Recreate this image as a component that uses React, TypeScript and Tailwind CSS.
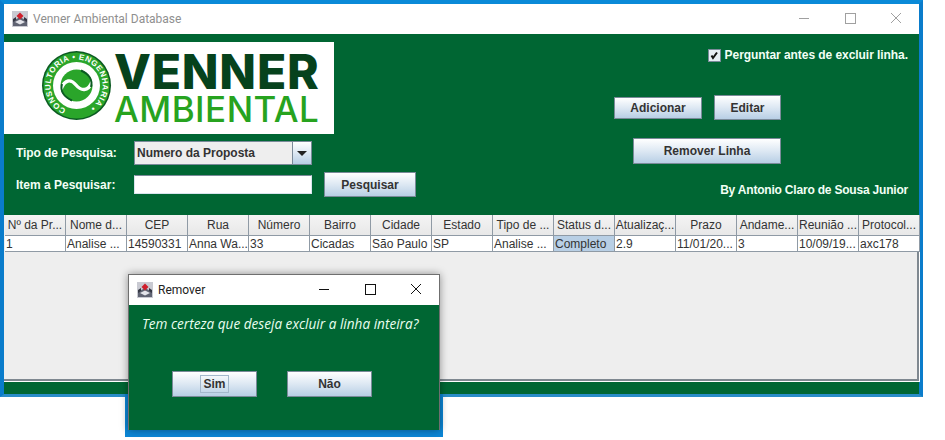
import React from "react";

const columns: [string, string, boolean?][] = [
  ["Nº da Pr...", "1"],
  ["Nome d...", "Analise ..."],
  ["CEP", "14590331"],
  ["Rua", "Anna Wa..."],
  ["Número", "33"],
  ["Bairro", "Cicadas"],
  ["Cidade", "São Paulo"],
  ["Estado", "SP"],
  ["Tipo de ...", "Analise ..."],
  ["Status d...", "Completo", true],
  ["Atualizaç...", "2.9"],
  ["Prazo", "11/01/20..."],
  ["Andame...", "3"],
  ["Reunião ...", "10/09/19..."],
  ["Protocol...", "axc178"],
];

function JavaIcon() {
  return (
    <svg width="16" height="16" viewBox="0 0 16 16" className="shrink-0">
      <rect x="0" y="0" width="16" height="16" fill="#c9cad2" />
      <path d="M1 10 L8 6 L15 10 L15 15 L1 15 Z" fill="#5f6372" />
      <path d="M3 11 L8 8.5 L13 11 L8 13.5 Z" fill="#e3e4ea" />
      <path d="M8 1.5 L11.5 5 L8 8.5 L4.5 5 Z" fill="#cf1f2c" />
      <path d="M1 8 L4 6 L4 9 L1 11 Z" fill="#343743" />
      <path d="M15 8 L12 6 L12 9 L15 11 Z" fill="#343743" />
    </svg>
  );
}

function MetalButton({ label, className, focus }: { label: string; className: string; focus?: boolean }) {
  return (
    <button
      className={`flex items-center justify-center border border-[#7a8a99] bg-gradient-to-b from-white via-[#dde8f3] to-[#b8cfe5] font-['Liberation_Sans',sans-serif] text-[12px] font-bold text-[#333333] ${className}`}
    >
      {focus ? <span className="border border-[#a3b8cc] px-[2px] leading-[16px]">{label}</span> : label}
    </button>
  );
}

function LogoMark() {
  return (
    <svg width="76" height="70" viewBox="0 0 76 70" className="shrink-0">
      <defs>
        <path id="ringPath" d="M38.5 60.5 A26 26 0 1 1 38.51 60.5" />
      </defs>
      <circle cx="38.5" cy="34.5" r="34.5" fill="#0b5a22" />
      <circle cx="38.5" cy="34.5" r="33" fill="#2aa52a" />
      <circle cx="38.5" cy="34.5" r="23.5" fill="#ffffff" />
      <circle cx="38.5" cy="34.5" r="16" fill="#2aa52a" />
      <path d="M23 38 C27 28 33 28 38 34 C43 40 50 41 54 31" fill="none" stroke="#ffffff" strokeWidth="3.4" />
      <path d="M43 19.5 C51 23 55 29 53 36" fill="none" stroke="#0b5a22" strokeWidth="2" />
      <path d="M34 49.5 C26 46 22 40 24 33" fill="none" stroke="#0b5a22" strokeWidth="2" />
      <text
        transform="rotate(24 38.5 34.5)"
        fontFamily="'Liberation Sans',sans-serif"
        fontSize="8"
        fontWeight="700"
        fill="#ffffff"
        letterSpacing="0.55"
      >
        <textPath href="#ringPath">CONSULTORIA • ENGENHARIA •</textPath>
      </text>
    </svg>
  );
}

function Logo() {
  return (
    <div className="flex h-[92px] w-[330px] items-start bg-white pl-[34px] pt-[9px]">
      <LogoMark />
      <div className="flex flex-col font-['Inter',sans-serif]">
        <span className="h-[42px] text-[48px] font-extrabold leading-[42px] tracking-[0.8px] text-[#06421c]">VENNER</span>
        <span className="h-[32px] text-[35px] font-medium leading-[32px] tracking-[0.45px] text-[#27a31f]">AMBIENTAL</span>
      </div>
    </div>
  );
}

function TitleBar({ title, dark }: { title: string; dark?: boolean }) {
  const stroke = dark ? "#111111" : "#a0a0a0";
  return (
    <div className="flex h-[30px] items-center bg-white pl-[8px]">
      <JavaIcon />
      <span
        className={`ml-[5px] flex-1 font-['Roboto',sans-serif] text-[12px] ${dark ? "text-[#222222]" : "text-[#8f8f8f]"}`}
      >
        {title}
      </span>
      <div className="flex items-center">
        <svg width="46" height="30" viewBox="0 0 46 30">
          <path d="M18 14.5 H28" stroke={stroke} />
        </svg>
        <svg width="46" height="30" viewBox="0 0 46 30">
          <rect x="18.5" y="9.5" width="10" height="10" fill="none" stroke={stroke} />
        </svg>
        <svg width="46" height="30" viewBox="0 0 46 30">
          <path d="M18 9 L28 19 M28 9 L18 19" stroke={stroke} />
        </svg>
      </div>
    </div>
  );
}

function Dialog() {
  return (
    <>
      <div className="absolute left-[125px] top-[394px] h-[43px] w-[318px] bg-[#0b86d6]" />
      <div className="absolute left-[128px] top-[274px] flex h-[156px] w-[312px] flex-col border-x border-t border-[#6f6f6f] bg-[#006633] shadow-[0_0_8px_rgba(0,0,0,0.4)]">
        <TitleBar title="Remover" dark />
        <p className="mt-[9px] pl-[13px] font-['Open_Sans',sans-serif] text-[13.6px] italic leading-[20px] text-[#eafff0]">
          Tem certeza que deseja excluir a linha inteira?
        </p>
        <div className="mt-[37px] flex gap-[30px] pl-[43px]">
          <MetalButton label="Sim" focus className="h-[26px] w-[85px]" />
          <MetalButton label="Não" className="h-[26px] w-[85px]" />
        </div>
      </div>
    </>
  );
}

export default function App() {
  return (
    <div className="relative h-[440px] w-[945px] overflow-hidden bg-white font-['Liberation_Sans',sans-serif]">
      <div className="h-[397px] w-[923px] border-x-[4px] border-b-[3px] border-t-[4px] border-x-[#0a7ccb] border-b-[#2a8cc8] border-t-[#0a8ad8]">
        <TitleBar title="Venner Ambiental Database" />
        <div className="flex h-[360px] flex-col bg-[#006633]">
          <div className="flex h-[181px]">
            <div className="flex w-[440px] flex-col pt-[8px]">
              <Logo />
              <div className="mt-[7px] grid grid-cols-[118px_178px_auto] grid-rows-[24px_25px] items-center gap-x-[12px] gap-y-[7px] text-[12px] font-bold text-[#f2fff5]">
                <span className="pl-[12px] tracking-[-0.1px]">Tipo de Pesquisa:</span>
                <div className="flex h-[24px] items-stretch border border-[#7a8a99] bg-[#eeeeee]">
                  <span className="flex flex-1 items-center pl-[2px] text-[#333333]">Numero da Proposta</span>
                  <span className="flex w-[19px] items-center justify-center border-l border-[#7a8a99] bg-gradient-to-b from-white via-[#dde8f3] to-[#b8cfe5]">
                    <svg width="10" height="5" viewBox="0 0 10 5">
                      <path d="M0 0 H10 L5 5 Z" fill="#222222" />
                    </svg>
                  </span>
                </div>
                <span className="col-start-3" />
                <span className="pl-[12px]">Item a Pesquisar:</span>
                <div className="h-[19px] border border-[#d9e4ee] border-t-[#7a8a99] bg-white" />
                <MetalButton label="Pesquisar" className="h-[25px] w-[92px]" />
              </div>
            </div>
            <div className="flex flex-1 flex-col items-end pr-[11px]">
              <label className="mt-[14px] flex items-center gap-[4px] text-[12px] font-bold leading-[14px] text-[#f2fff5]">
                <span className="flex h-[13px] w-[13px] items-center justify-center border border-[#7a8a99] bg-[#e6edf4]">
                  <svg width="10" height="10" viewBox="0 0 10 10">
                    <path d="M2.5 5.5 L4 8 L8 2.5" fill="none" stroke="#111111" strokeWidth="2" />
                  </svg>
                </span>
                <span className="tracking-[-0.06px]">Perguntar antes de excluir linha.</span>
              </label>
              <div className="mr-[127px] mt-[33px] flex items-center gap-[12px]">
                <MetalButton label="Adicionar" className="h-[22px] w-[88px]" />
                <MetalButton label="Editar" className="h-[25px] w-[67px]" />
              </div>
              <MetalButton label="Remover Linha" className="mr-[127px] mt-[18px] h-[26px] w-[148px]" />
              <span className="mt-[19px] text-[12px] font-bold leading-[14px] tracking-[-0.2px] text-[#f2fff5]">
                By Antonio Claro de Sousa Junior
              </span>
            </div>
          </div>
          <div className="h-[167px] w-[916px] border-b border-r border-white">
            <div className="h-full border-b-[2px] border-r-[2px] border-[#7f8890] bg-[#eeeeee]">
              <div className="grid w-[915px] grid-cols-[repeat(15,61px)] pl-[1px] text-[12px] text-[#333333]">
                {columns.map(([head]) => (
                  <div
                    key={head}
                    className="flex h-[20px] items-center justify-center overflow-hidden whitespace-nowrap border-r border-[#8f9aa5] bg-gradient-to-b from-[#f4f4f4] to-[#e8e8e8]"
                  >
                    {head}
                  </div>
                ))}
                {columns.map(([head, value, selected]) => (
                  <div
                    key={head}
                    className={`flex h-[17px] items-center overflow-hidden whitespace-nowrap border-y border-r border-[#8f9aa5] pl-[1px] ${
                      selected ? "bg-[#b8cfe5]" : "bg-white"
                    }`}
                  >
                    {value}
                  </div>
                ))}
              </div>
            </div>
          </div>
        </div>
      </div>
      <Dialog />
    </div>
  );
}
